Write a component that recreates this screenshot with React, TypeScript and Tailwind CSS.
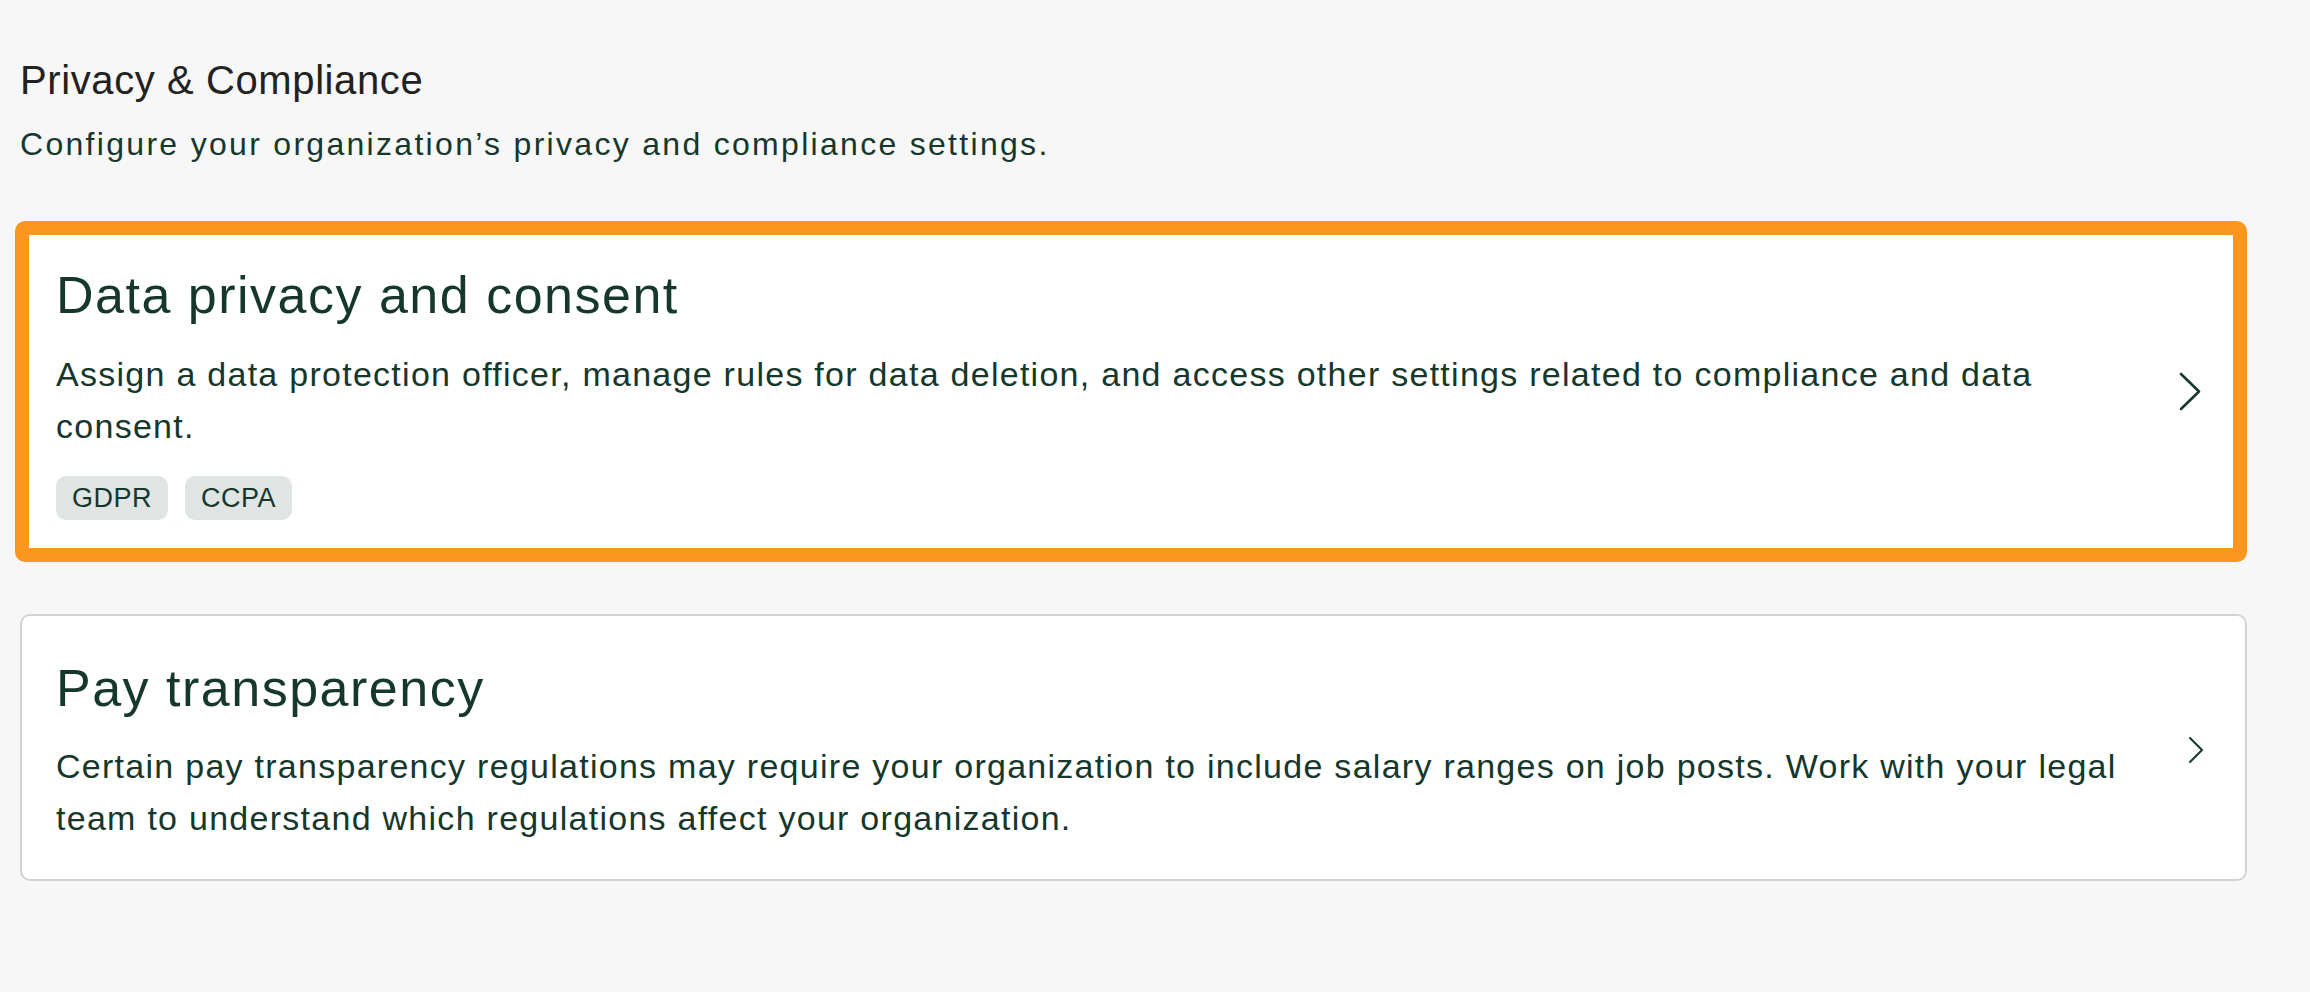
const font = { fontFamily: '"Liberation Sans", Arial, sans-serif' };

function Chevron({ big }: { big?: boolean }) {
  if (big) {
    return (
      <svg width={20} height={37} viewBox="0 0 20 37" fill="none" className="shrink-0 overflow-visible">
        <polyline points="1,1 19,18.5 1,36" stroke="#15372c" strokeWidth={2.6} strokeLinecap="round" strokeLinejoin="round" />
      </svg>
    );
  }
  return (
    <svg width={14} height={26} viewBox="0 0 14 26" fill="none" className="shrink-0 overflow-visible">
      <polyline points="1,1 13,13 1,25" stroke="#15372c" strokeWidth={2} strokeLinecap="round" strokeLinejoin="round" />
    </svg>
  );
}

export default function App() {
  return (
    <div className="min-h-screen bg-[#f7f7f7] pl-5 pr-[63px] pt-[56px] pb-20 text-[#15372c]" style={font}>
      {/* Header */}
      <h1 className="text-[40px] leading-[48px] font-normal tracking-[0.6px] text-[#222222]">Privacy &amp; Compliance</h1>
      <p className="mt-[18px] text-[32px] leading-[44px] tracking-[2.3px]">
        Configure your organization’s privacy and compliance settings.
      </p>

      {/* Highlighted card */}
      <div className="-ml-[5px] mt-[55px] flex items-center rounded-[10px] border-[14px] border-[#fb961f] bg-white pl-[27px] pr-[33px] pt-[28px] pb-[28px]">
        <div className="flex-1 pr-[29px]">
          <h2 className="text-[52px] leading-[64px] font-normal tracking-[1.5px]">Data privacy and consent</h2>
          <p className="mt-[21px] text-[34px] leading-[52px] tracking-[1.27px]">
            Assign a data protection officer, manage rules for data deletion, and access other settings related to
            compliance and data consent.
          </p>
          <div className="mt-[24px] flex gap-[17px]">
            <span className="rounded-[10px] bg-[#e0e5e3] px-4 text-[27px] leading-[44px] tracking-[0.5px]">GDPR</span>
            <span className="rounded-[10px] bg-[#e0e5e3] px-4 text-[27px] leading-[44px] tracking-[0.5px]">CCPA</span>
          </div>
        </div>
        <Chevron big />
      </div>

      {/* Pay transparency card */}
      <div className="mt-[52px] flex items-center rounded-[10px] border-2 border-[#d0d5d3] bg-white pl-[34px] pr-[42px] pt-[40px] pb-[35px]">
        <div className="flex-1 pr-[39px]">
          <h2 className="text-[52px] leading-[64px] font-normal tracking-[1.5px]">Pay transparency</h2>
          <p className="mt-[20px] text-[34px] leading-[52px] tracking-[1.27px]">
            Certain pay transparency regulations may require your organization to include salary ranges on job posts.
            Work with your legal team to understand which regulations affect your organization.
          </p>
        </div>
        <Chevron />
      </div>
    </div>
  );
}
